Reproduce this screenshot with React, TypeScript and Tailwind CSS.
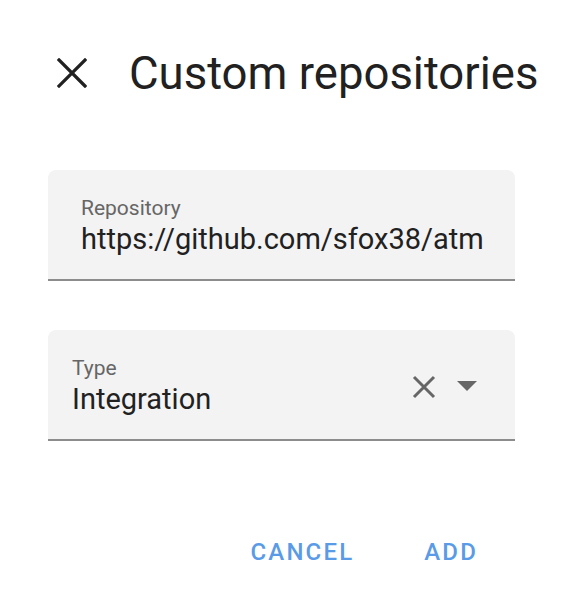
export default function App() {
  return (
    <div className="w-[564px] h-[612px] bg-white overflow-hidden font-['Roboto',_sans-serif]">
      <div className="flex items-start pt-[51px] pl-[57px]">
        <svg width="30" height="30" viewBox="0 0 30 30" className="shrink-0 mt-[7px]">
          <path d="M2 2 L28 28 M28 2 L2 28" stroke="#212121" strokeWidth="3.2" strokeLinecap="square" fill="none" />
        </svg>
        <h1 className="ml-[42px] text-[45.5px] leading-none text-[#212121] whitespace-nowrap">Custom repositories</h1>
      </div>

      <div className="ml-[48px] w-[467px] mt-[73px] flex flex-col gap-[49px]">
        <div className="h-[111px] rounded-t-[8px] bg-[#f3f3f3] border-b-2 border-[#8c8c8c] pl-[33px] pt-[28px]">
          <div className="text-[21px] leading-none text-[#666666]">Repository</div>
          <div className="mt-[6px] text-[29px] leading-none text-[#212121] whitespace-nowrap">https://github.com/sfox38/atm</div>
        </div>

        <div className="h-[111px] rounded-t-[8px] bg-[#f3f3f3] border-b-2 border-[#8c8c8c] pl-[24px] pr-[38px] flex items-start">
          <div className="flex-1 pt-[28px]">
            <div className="text-[21px] leading-none text-[#666666]">Type</div>
            <div className="mt-[6px] text-[29px] leading-none text-[#212121]">Integration</div>
          </div>
          <svg width="24" height="24" viewBox="0 0 24 24" className="mt-[45px]">
            <path d="M2 2 L22 22 M22 2 L2 22" stroke="#666666" strokeWidth="3" fill="none" />
          </svg>
          <svg width="20" height="10" viewBox="0 0 20 10" className="ml-[21px] mt-[51px]">
            <path d="M0 0 L20 0 L10 10 Z" fill="#666666" />
          </svg>
        </div>
      </div>

      <div className="flex justify-end pr-[86px] mt-[99px] gap-[70px] text-[24px] font-medium tracking-[0.09em] text-[#5a9be8] leading-none">
        <span>CANCEL</span>
        <span>ADD</span>
      </div>
    </div>
  );
}
